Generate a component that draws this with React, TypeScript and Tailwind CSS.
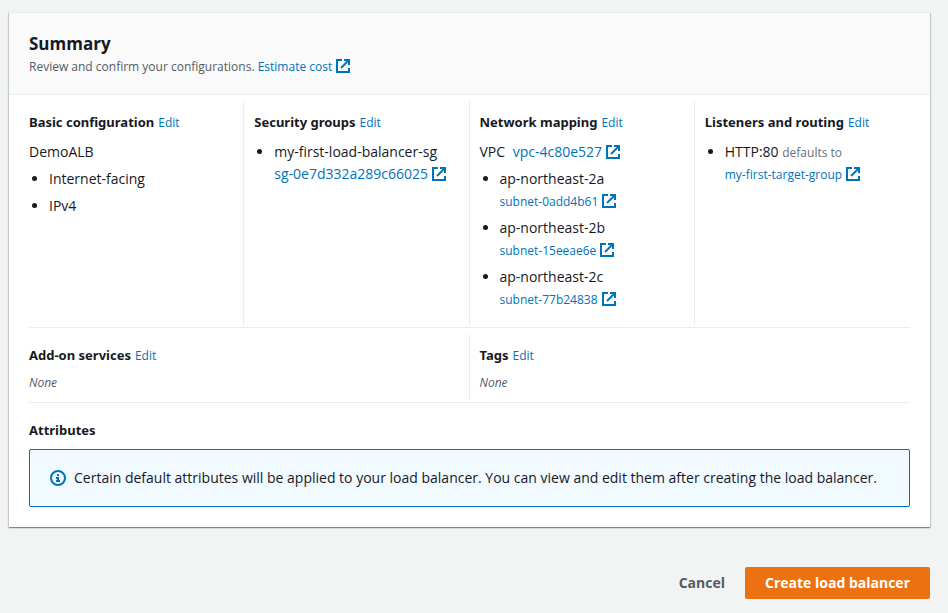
import type { ReactNode } from "react";

function ExternalIcon() {
  return (
    <svg
      viewBox="0 0 14 14"
      className="ml-1 inline-block size-[14px] align-[-2px]"
      fill="none"
      stroke="currentColor"
      strokeWidth="2"
      aria-hidden="true"
    >
      <path d="M6 1H1v12h12V9" />
      <path d="M8 1h5v5" />
      <path d="M13 1L5 9" />
    </svg>
  );
}

function ExternalLink({ children, small = false }: { children: ReactNode; small?: boolean }) {
  return (
    <a href="#" className={`whitespace-nowrap text-[#0073bb] ${small ? "text-xs leading-4" : "text-sm leading-[22px]"}`}>
      {children}
      <ExternalIcon />
    </a>
  );
}

function Heading({ children, edit = true }: { children: ReactNode; edit?: boolean }) {
  return (
    <h3 className="font-['Noto_Sans','Open_Sans',sans-serif] text-[13px] leading-[22px] font-bold whitespace-nowrap">
      {children}
      {edit && (
        <a href="#" className="ml-1 font-['Open_Sans','Noto_Sans',sans-serif] text-xs leading-4 font-normal text-[#0073bb]">
          Edit
        </a>
      )}
    </h3>
  );
}

function Column({ children, last = false }: { children: ReactNode; last?: boolean }) {
  return (
    <section className={`min-w-0 px-[10px] pt-[10px] ${last ? "" : "border-r border-[#eaeded]"}`}>
      {children}
    </section>
  );
}

function Empty() {
  return (
    <p className="mt-[5px] pb-[7px]">
      <span className="text-xs leading-4 text-[#545b64] italic">None</span>
    </p>
  );
}

const subnets = [
  { zone: "ap-northeast-2a", id: "subnet-0add4b61" },
  { zone: "ap-northeast-2b", id: "subnet-15eeae6e" },
  { zone: "ap-northeast-2c", id: "subnet-77b24838" },
];

export default function App() {
  return (
    <main className="min-h-screen bg-[#f2f3f3] pt-3 pr-[18px] pb-[14px] pl-[9px] font-['Open_Sans','Noto_Sans',sans-serif] text-sm leading-[22px] text-[#16191f]">
      <div className="bg-white shadow-[0_1px_1px_0_rgba(0,28,36,0.3),1px_1px_1px_0_rgba(0,28,36,0.15),-1px_1px_1px_0_rgba(0,28,36,0.15)]">
        <header className="border-t border-b border-[#eaeded] bg-[#fafafa] px-5 pt-5 pb-[17px]">
          <h2 className="text-[17px] leading-[22px] font-bold">Summary</h2>
          <p>
            <span className="text-xs leading-4 text-[#545b64]">
              Review and confirm your configurations. <ExternalLink small>Estimate cost</ExternalLink>
            </span>
          </p>
        </header>

        <div className="px-5 pt-[6px] pb-5">
          <div className="-mx-[10px] grid grid-cols-4">
            <Column>
              <Heading>Basic configuration</Heading>
              <p className="mt-2">DemoALB</p>
              <ul className="mt-[5px] list-disc space-y-[5px] pl-5">
                <li>Internet-facing</li>
                <li>IPv4</li>
              </ul>
            </Column>
            <Column>
              <Heading>Security groups</Heading>
              <ul className="mt-2 list-disc pl-5">
                <li>
                  my-first-load-balancer-sg
                  <div>
                    <ExternalLink>sg-0e7d332a289c66025</ExternalLink>
                  </div>
                </li>
              </ul>
            </Column>
            <Column>
              <Heading>Network mapping</Heading>
              <p className="mt-2">
                VPC <span className="ml-1"><ExternalLink>vpc-4c80e527</ExternalLink></span>
              </p>
              <ul className="mt-[5px] list-disc space-y-[5px] pb-[15px] pl-5">
                {subnets.map((s) => (
                  <li key={s.id}>
                    {s.zone}
                    <div>
                      <ExternalLink small>{s.id}</ExternalLink>
                    </div>
                  </li>
                ))}
              </ul>
            </Column>
            <Column last>
              <Heading>Listeners and routing</Heading>
              <ul className="mt-2 list-disc pl-5">
                <li>
                  HTTP:80 <span className="text-xs leading-4 text-[#687078]">defaults to</span>
                  <div>
                    <ExternalLink small>my-first-target-group</ExternalLink>
                  </div>
                </li>
              </ul>
            </Column>
          </div>

          <hr className="mt-[2px] mb-[6px] border-[#eaeded]" />

          <div className="-mx-[10px] grid grid-cols-2">
            <Column>
              <Heading>Add-on services</Heading>
              <Empty />
            </Column>
            <Column last>
              <Heading>Tags</Heading>
              <Empty />
            </Column>
          </div>

          <hr className="mt-[2px] mb-4 border-[#eaeded]" />

          <Heading edit={false}>Attributes</Heading>
          <div className="mt-2 flex items-center gap-2 rounded-[2px] border border-[#0073bb] bg-[#f1faff] px-5 py-[17px]">
            <svg viewBox="0 0 16 16" className="size-4 shrink-0 text-[#0073bb]" fill="none" stroke="currentColor" strokeWidth="2" aria-hidden="true">
              <circle cx="8" cy="8" r="7" />
              <path d="M8 11V8H6M10 11H6" />
              <path d="M8 6V4" />
            </svg>
            <p>
              Certain default attributes will be applied to your load balancer. You can view and edit them after
              creating the load balancer.
            </p>
          </div>
        </div>
      </div>

      <footer className="mt-10 flex justify-end">
        <button type="button" className="h-8 px-5 text-sm font-bold text-[#545b64]">
          Cancel
        </button>
        <button type="button" className="h-8 rounded-[2px] bg-[#ec7211] px-5 text-sm font-bold text-white">
          Create load balancer
        </button>
      </footer>
    </main>
  );
}
